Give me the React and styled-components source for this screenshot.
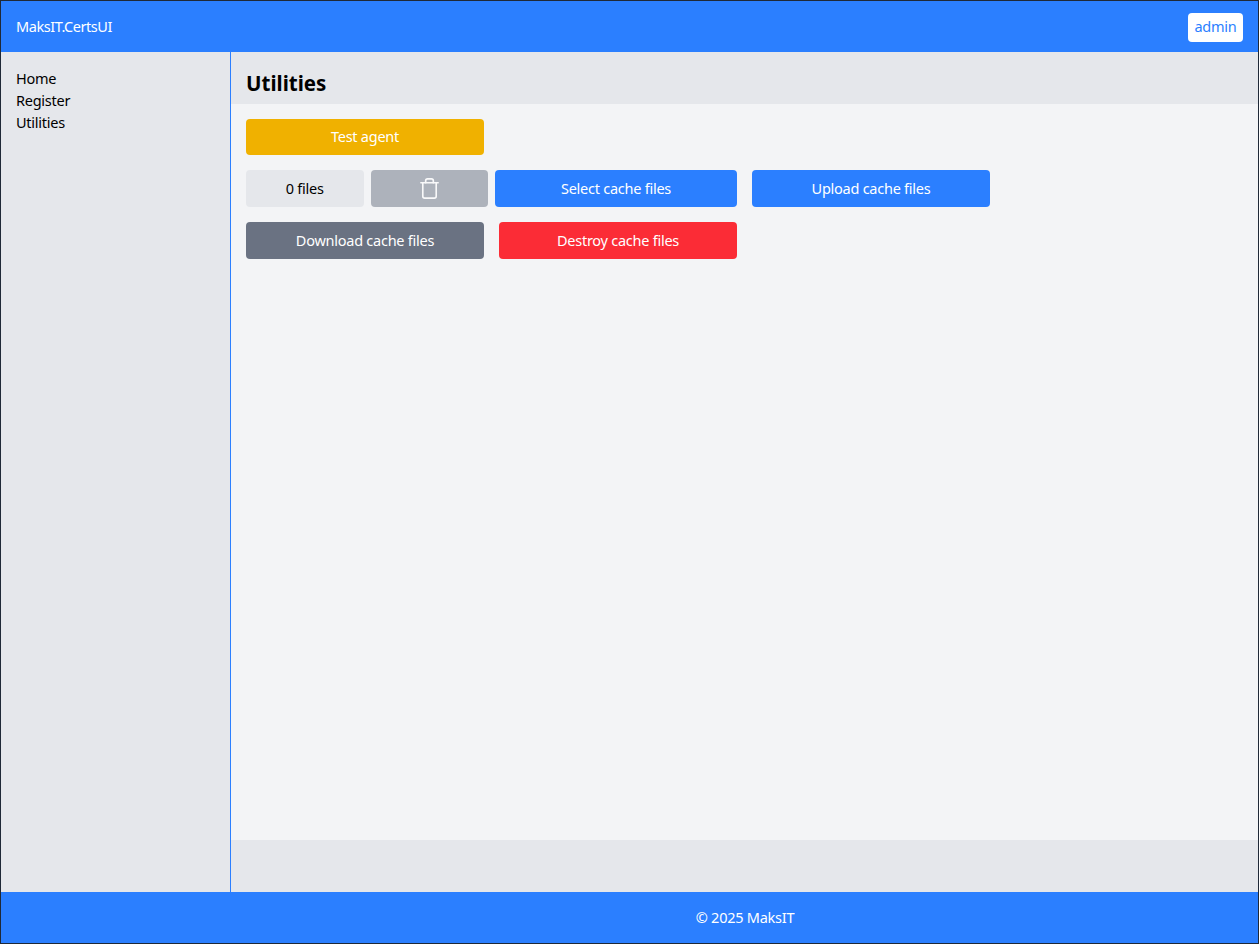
import React from 'react';
import styled, { createGlobalStyle } from 'styled-components';
import { Trash } from 'lucide-react';

const GlobalStyle = createGlobalStyle`
  html, body {
    margin: 0;
    padding: 0;
    height: 100%;
  }

  body {
    font-family: "Noto Sans", "Open Sans", sans-serif;
    font-size: 14.5px;
    letter-spacing: -0.25px;
    color: #000000;
    background: #f3f4f6;
  }

  * {
    box-sizing: border-box;
  }
`;

const Page = styled.div`
  width: 1259px;
  height: 944px;
  border: 1px solid #1f2937;
  display: grid;
  grid-template-rows: 51px 1fr 51px;
  overflow: hidden;
`;

const TopBar = styled.header`
  background: #2b7fff;
  color: #ffffff;
  display: flex;
  align-items: center;
  justify-content: space-between;
  padding: 0 15px;
`;

const Brand = styled.div`
  letter-spacing: -0.45px;
  padding-bottom: 2px;
`;

const UserButton = styled.button`
  height: 29px;
  margin-top: 1px;
  padding: 0 6.5px 2px;
  border: none;
  border-radius: 4px;
  background: #ffffff;
  color: #2b7fff;
  font: inherit;
  letter-spacing: inherit;
`;

const Middle = styled.div`
  display: grid;
  grid-template-columns: 230px 1fr;
  min-height: 0;
`;

const SideNav = styled.nav`
  background: #e5e7eb;
  border-right: 1px solid #2b7fff;
  padding: 15px 15px;
  display: flex;
  flex-direction: column;
`;

const NavLink = styled.a`
  line-height: 22px;
  color: #000000;
`;

const Content = styled.main`
  display: grid;
  grid-template-rows: 52px 1fr 52px;
  min-width: 0;
`;

const TitleBar = styled.div`
  background: #e5e7eb;
  display: flex;
  align-items: center;
  padding: 10px 15px 0;
`;

const Title = styled.h1`
  margin: 0;
  font-size: 20.5px;
  font-weight: 700;
  letter-spacing: 0;
`;

const Body = styled.div`
  background: #f3f4f6;
  padding: 15px;
`;

const ActionGrid = styled.div`
  display: grid;
  grid-template-columns: repeat(4, 1fr);
  grid-template-rows: 36px 37px 37px;
  gap: 15px;
`;

const Spacer = styled.div`
  grid-column: span ${(p) => p.$span || 1};
`;

const FileRow = styled.div`
  grid-column: span 2;
  display: grid;
  grid-template-columns: repeat(4, 1fr);
  gap: 7px;
`;

const Button = styled.button`
  grid-column: span ${(p) => p.$span || 1};
  height: 100%;
  padding: 0 0 ${(p) => (p.$icon ? '0' : '2px')};
  border: none;
  border-radius: 4px;
  background: ${(p) => p.$bg};
  color: #ffffff;
  font: inherit;
  letter-spacing: inherit;
  display: flex;
  align-items: center;
  justify-content: center;
  opacity: ${(p) => (p.disabled ? 0.5 : 1)};
`;

const FileCount = styled.div`
  padding-bottom: 2px;
  border-radius: 4px;
  background: #e5e7eb;
  display: flex;
  align-items: center;
  justify-content: center;
`;

const ContentFooter = styled.div`
  background: #e5e7eb;
`;

const BottomBar = styled.footer`
  background: #2b7fff;
  color: #ffffff;
  display: flex;
  align-items: center;
  justify-content: center;
  padding: 0 0 2px 231px;
`;

const BLUE = '#2b7fff';
const GRAY = '#6a7282';

export default function App() {
  return (
    <>
      <GlobalStyle />
      <Page>
        <TopBar>
          <Brand>MaksIT.CertsUI</Brand>
          <UserButton>admin</UserButton>
        </TopBar>
        <Middle>
          <SideNav>
            <NavLink>Home</NavLink>
            <NavLink>Register</NavLink>
            <NavLink>Utilities</NavLink>
          </SideNav>
          <Content>
            <TitleBar>
              <Title>Utilities</Title>
            </TitleBar>
            <Body>
              <ActionGrid>
                <Button $bg="#f0b100">Test agent</Button>
                <Spacer $span={3} />
                <FileRow>
                  <FileCount>0 files</FileCount>
                  <Button $bg={GRAY} $icon disabled>
                    <Trash size={23} strokeWidth={1.7} />
                  </Button>
                  <Button $bg={BLUE} $span={2}>Select cache files</Button>
                </FileRow>
                <Button $bg={BLUE}>Upload cache files</Button>
                <Spacer />
                <Button $bg={GRAY}>Download cache files</Button>
                <Button $bg="#fb2c36">Destroy cache files</Button>
              </ActionGrid>
            </Body>
            <ContentFooter />
          </Content>
        </Middle>
        <BottomBar>© 2025 MaksIT</BottomBar>
      </Page>
    </>
  );
}
